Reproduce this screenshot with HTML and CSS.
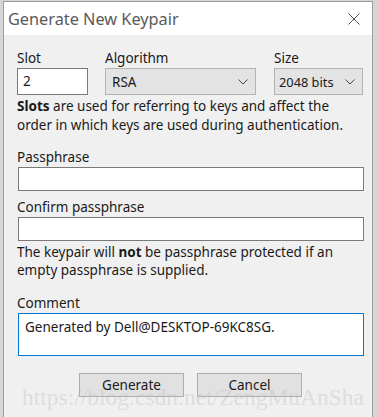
FILE: index.html
```html
<!DOCTYPE html>
<html>
<head>
<meta charset="utf-8">
<link rel="stylesheet" href="styles.css">
</head>
<body>
<div class="window">
  <div class="titlebar">
    <span class="title">Generate New Keypair</span>
    <svg class="close" width="12" height="12" viewBox="0 0 12 12"><path d="M0.5 0.5 L11.5 11.5 M11.5 0.5 L0.5 11.5" stroke="#555" stroke-width="1" fill="none"/></svg>
  </div>
  <div class="content">
    <div class="toprow">
      <div class="col slotcol">
        <div class="label">Slot</div>
        <div class="field">2</div>
      </div>
      <div class="col algcol">
        <div class="label">Algorithm</div>
        <div class="select"><span>RSA</span><svg width="10" height="6" viewBox="0 0 10 6"><path d="M0.5 0.5 L5 5 L9.5 0.5" stroke="#444" fill="none"/></svg></div>
      </div>
      <div class="col sizecol">
        <div class="label">Size</div>
        <div class="select size"><span>2048 bits</span><svg width="10" height="6" viewBox="0 0 10 6"><path d="M0.5 0.5 L5 5 L9.5 0.5" stroke="#444" fill="none"/></svg></div>
      </div>
    </div>
    <p class="help"><span class="strong">Slots</span> are used for referring to keys and affect the order in which keys are used during authentication.</p>
    <div class="label pass-label">Passphrase</div>
    <div class="field wide"></div>
    <div class="label confirm-label">Confirm passphrase</div>
    <div class="field wide"></div>
    <p class="note">The keypair will <span class="strong">not</span> be passphrase protected if an empty passphrase is supplied.</p>
    <div class="label comment-label">Comment</div>
    <div class="field comment">Generated by Dell@DESKTOP-69KC8SG.</div>
    <div class="buttons">
      <div class="btn">Generate</div>
      <div class="btn">Cancel</div>
    </div>
  </div>
  <div class="watermark">https://blog.csdn.net/ZengMuAnSha</div>
</div>
</body>
</html>
```
FILE: styles.css
```css
html, body {
  margin: 0;
  padding: 0;
}
body {
  background: #d6d6d6;
  font-family: "Noto Sans", "Open Sans", sans-serif;
  font-size: 13.5px;
  color: #1a1a1a;
  width: 378px;
  height: 417px;
  overflow: hidden;
}
.window {
  position: relative;
  margin: 1px 0 0 3px;
  width: 368px;
  height: 420px;
  border: 1px solid #9d9d9d;
  background: #f0f0f0;
}
.titlebar {
  height: 33px;
  background: #ffffff;
  display: flex;
  align-items: center;
  justify-content: space-between;
  padding: 0 12px 0 4px;
}
.title {
  font-size: 16.3px;
  color: #5a5a5a;
}
.close {
  display: block;
}
.content {
  padding: 15px 0 0 13px;
  width: 346px;
}
.toprow {
  display: flex;
  gap: 17px;
}
.label {
  height: 16px;
  line-height: 16px;
  margin-bottom: 2px;
}
.field {
  box-sizing: border-box;
  height: 27px;
  background: #fff;
  border: 1px solid #7a7a7a;
  padding: 0 5px;
  line-height: 25px;
}
.slotcol { width: 71px; }
.algcol { width: 151px; }
.sizecol { width: 89px; margin-left: 1px; }
.select {
  box-sizing: border-box;
  height: 27px;
  background: #e3e3e3;
  border: 1px solid #b3b3b3;
  display: flex;
  align-items: center;
  justify-content: space-between;
  padding: 0 7px 0 6px;
}
.select.size {
  font-size: 12.8px;
  padding-left: 4px;
}
.select svg { display: block; }
.strong { font-weight: bold; }
.help {
  margin: 2px 0 0 0;
  line-height: 18.5px;
  width: 340px;
}
.pass-label { margin-top: 15px; }
.wide {
  height: 24px;
  width: 346px;
  margin-left: 1px;
}
.confirm-label { margin-top: 8px; }
.note {
  margin: 2px 0 0 0;
  line-height: 18.4px;
  width: 340px;
}
.comment-label { margin-top: 15px; }
.comment {
  height: 43px;
  width: 346px;
  margin-left: 1px;
  border-color: #0078d7;
  line-height: 18.4px;
  padding: 4px 6px;
}
.buttons {
  display: flex;
  gap: 13px;
  margin: 17px 0 0 62px;
}
.btn {
  box-sizing: border-box;
  width: 105px;
  height: 24px;
  background: #e1e1e1;
  border: 1px solid #adadad;
  display: flex;
  align-items: center;
  justify-content: center;
}
.watermark {
  position: absolute;
  left: 18px;
  top: 384px;
  line-height: 23px;
  font-family: "Liberation Serif", serif;
  font-size: 23.5px;
  color: rgba(190, 190, 190, 0.4);
  white-space: nowrap;
  pointer-events: none;
}
```
